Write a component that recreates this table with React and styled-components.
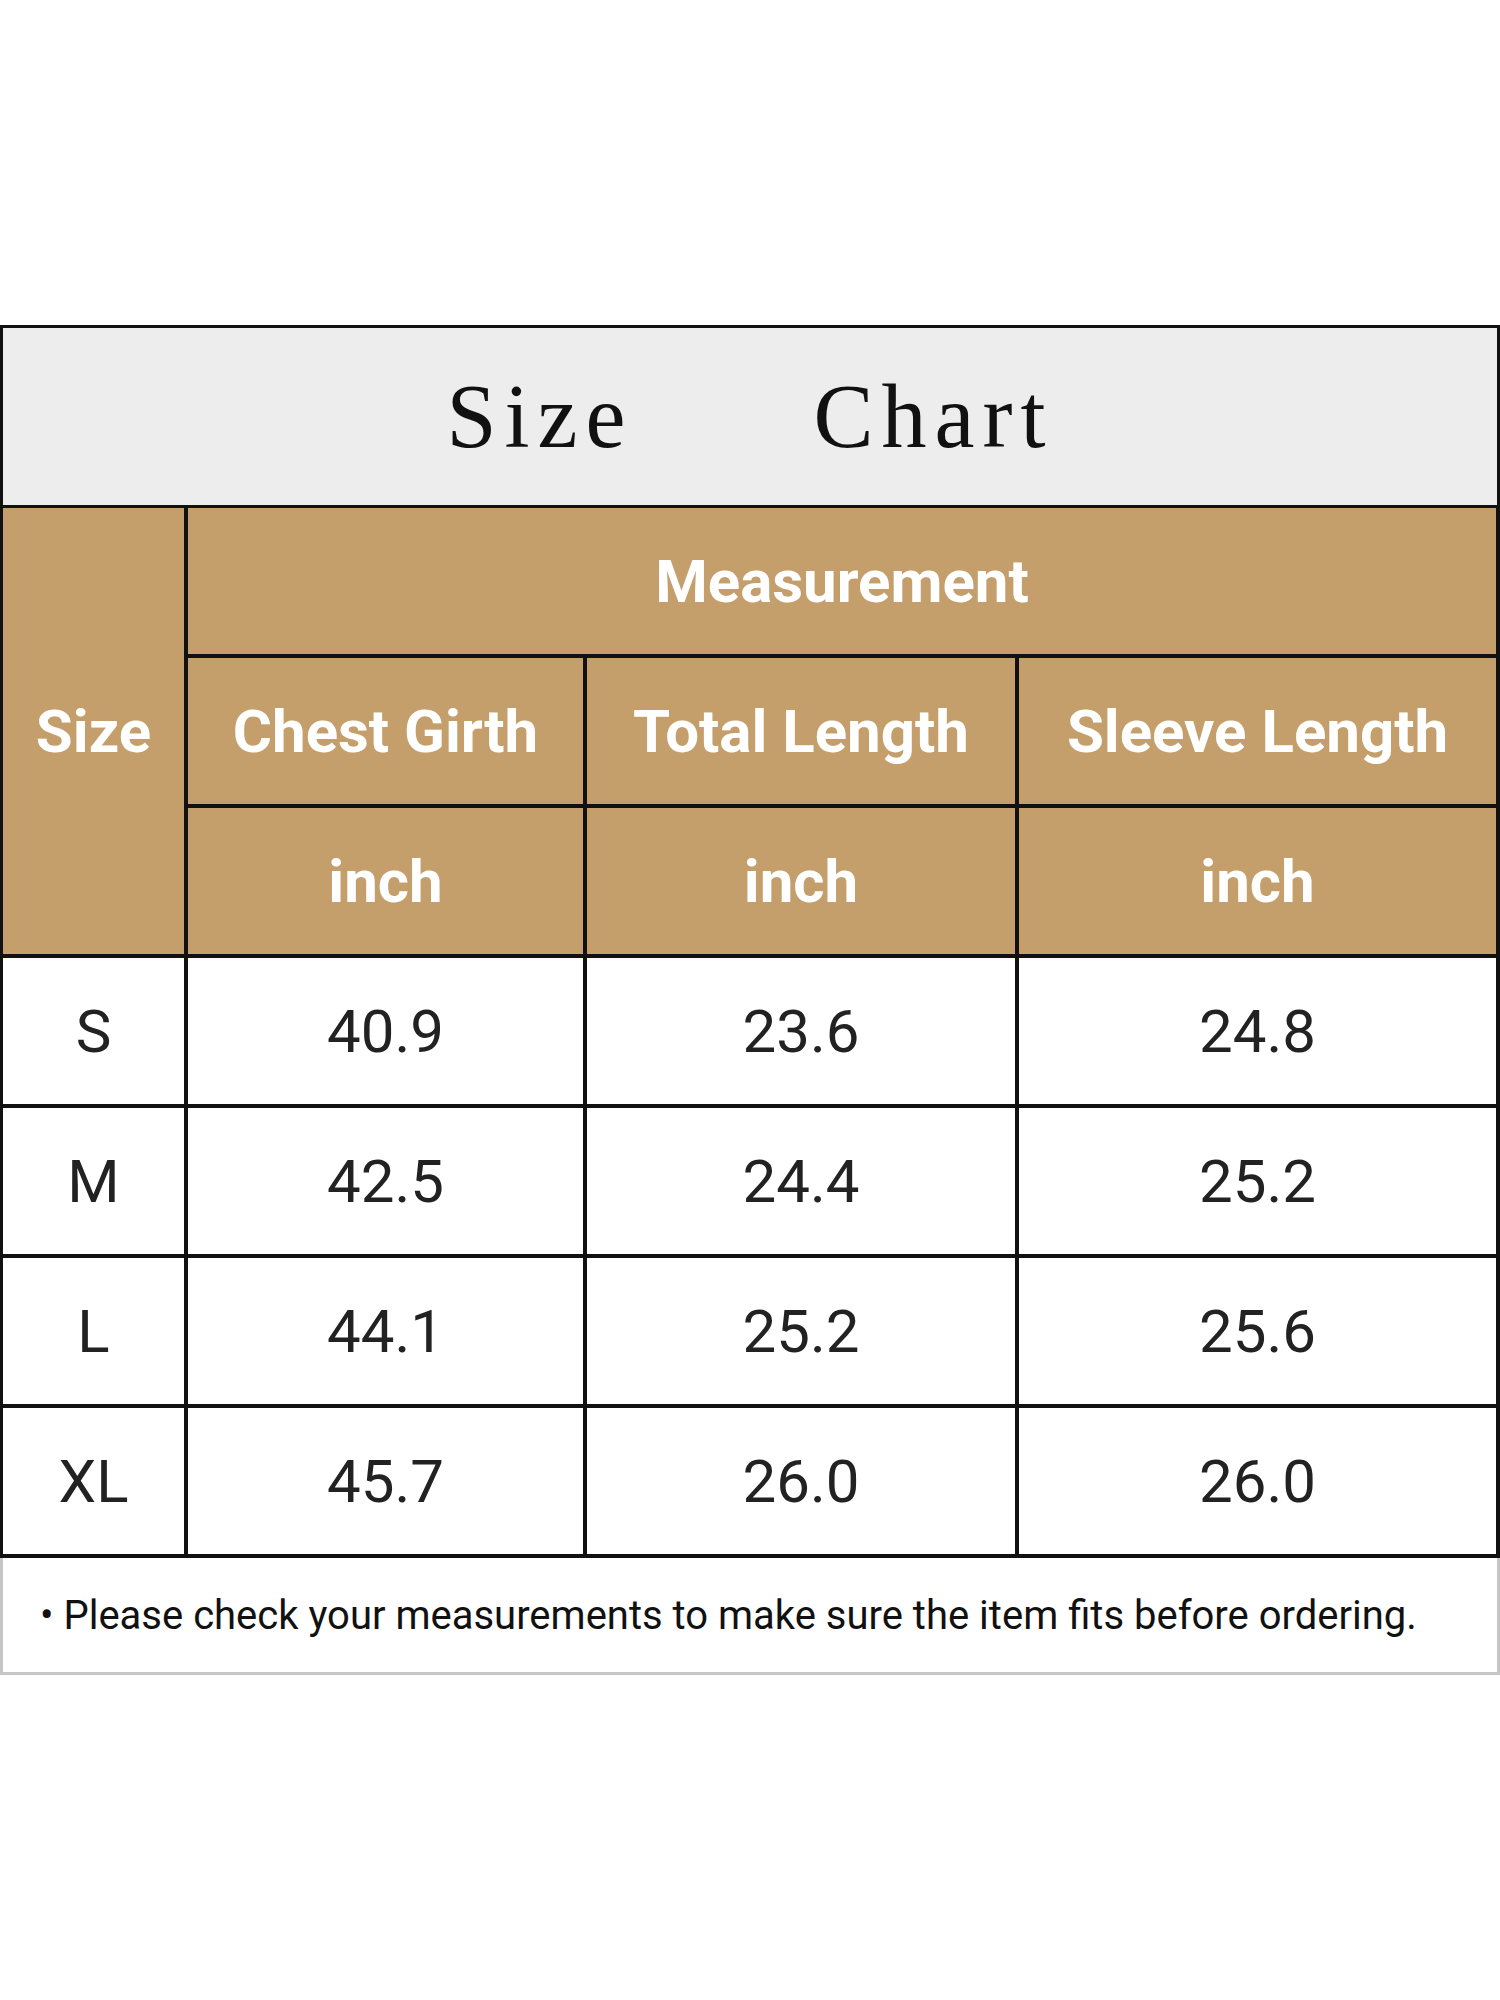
import React from "react";
import styled, { createGlobalStyle } from "styled-components";

const GlobalStyle = createGlobalStyle`
  html, body {
    margin: 0;
    padding: 0;
    background: #ffffff;
    font-family: Roboto, "Liberation Sans", sans-serif;
  }
`;

const Page = styled.div`
  width: 1500px;
  height: 2000px;
  padding-top: 325px;
  box-sizing: border-box;
  background: #ffffff;
`;

const TitleBar = styled.div`
  height: 180px;
  box-sizing: border-box;
  background: #ededed;
  border: 3px solid #111;
  border-bottom: none;
  display: flex;
  align-items: center;
  justify-content: center;
`;

const Title = styled.h1`
  margin: 0;
  display: flex;
  gap: 180px;
  font-family: "Liberation Serif", "Times New Roman", serif;
  font-weight: 400;
  font-size: 90px;
  line-height: 1;
  letter-spacing: 8px;
  color: #111;
`;

const Grid = styled.div`
  display: grid;
  grid-template-columns: 181px 395px 428px 477px;
  grid-auto-rows: 146px;
  gap: 4px;
  padding: 3px 4px 4px 3px;
  background: #111;
`;

const Cell = styled.div`
  display: flex;
  align-items: center;
  justify-content: center;
  background: ${(p) => (p.$head ? "#c49f6b" : "#ffffff")};
  color: ${(p) => (p.$head ? "#ffffff" : "#222222")};
  font-size: 60px;
  font-weight: ${(p) => (p.$head ? 700 : 400)};
  grid-column: ${(p) => p.$col || "auto"};
  grid-row: ${(p) => p.$row || "auto"};
`;

const Note = styled.div`
  height: 117px;
  box-sizing: border-box;
  border: 3px solid #c6c6c6;
  border-top: none;
  display: flex;
  align-items: center;
  padding-left: 37px;
  font-size: 40px;
  color: #111;
`;

const columns = ["Chest Girth", "Total Length", "Sleeve Length"];

const rows = [
  ["S", "40.9", "23.6", "24.8"],
  ["M", "42.5", "24.4", "25.2"],
  ["L", "44.1", "25.2", "25.6"],
  ["XL", "45.7", "26.0", "26.0"],
];

export default function App() {
  return (
    <Page>
      <GlobalStyle />
      <TitleBar>
        <Title>
          <span>Size</span>
          <span>Chart</span>
        </Title>
      </TitleBar>
      <Grid>
        <Cell $head $row="1 / span 3">
          Size
        </Cell>
        <Cell $head $col="2 / span 3">
          Measurement
        </Cell>
        {columns.map((c) => (
          <Cell $head key={c}>
            {c}
          </Cell>
        ))}
        {columns.map((c) => (
          <Cell $head key={c + "-unit"}>
            inch
          </Cell>
        ))}
        {rows.map((r) =>
          r.map((v, i) => <Cell key={r[0] + i}>{v}</Cell>)
        )}
      </Grid>
      <Note>• Please check your measurements to make sure the item fits before ordering.</Note>
    </Page>
  );
}
